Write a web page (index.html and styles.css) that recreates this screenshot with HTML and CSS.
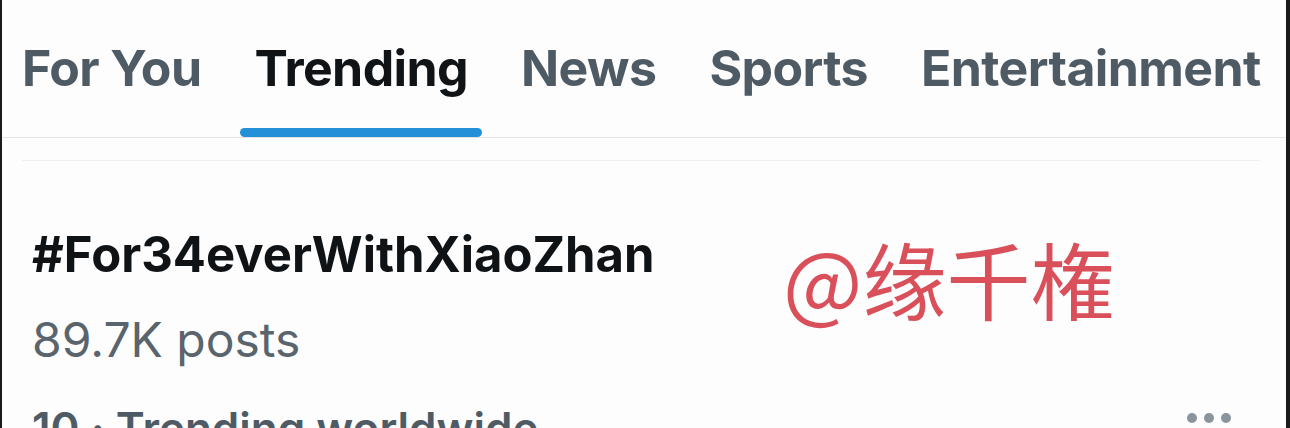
FILE: index.html
```html
<!DOCTYPE html>
<html lang="en">
<head>
  <meta charset="UTF-8">
  <meta name="viewport" content="width=device-width, initial-scale=1.0">
  <title>Explore - Trending</title>
  <link rel="stylesheet" href="styles.css">
</head>
<body>
  <div id="explore">
    <nav class="tabs">
      <a class="tab">For You</a>
      <a class="tab active">Trending</a>
      <a class="tab">News</a>
      <a class="tab">Sports</a>
      <a class="tab">Entertainment</a>
    </nav>
    <div class="separator"></div>

    <div class="trend">
      <div class="trend-name">#For34everWithXiaoZhan</div>
      <div class="trend-count">89.7K posts</div>
      <div class="trend-meta">
        <span>10 · Trending worldwide</span>
        <span class="more">
          <svg width="46" height="12" viewBox="0 0 46 12">
            <circle cx="6" cy="6" r="5" fill="#8a949c" />
            <circle cx="23" cy="6" r="5" fill="#8a949c" />
            <circle cx="40" cy="6" r="5" fill="#8a949c" />
          </svg>
        </span>
      </div>
      <div class="watermark">@缘千権</div>
    </div>
  </div>
</body>
</html>
```

FILE: styles.css
```css
body {
  font-family: Inter, 'Open Sans', sans-serif;
  margin: 0;
  padding: 0;
  background-color: #fdfdfd;
  height: 428px;
  overflow: hidden;
}

#explore {
  height: 428px;
  box-sizing: border-box;
  border-left: 2px solid #1b1b1b;
  border-right: 4px solid #1b1b1b;
  background: #fdfdfd;
  overflow: hidden;
}

.tabs {
  display: flex;
  gap: 25px;
  padding: 0 6px;
  border-bottom: 1px solid #e2e4e6;
}

.tab {
  display: flex;
  flex-direction: column;
  justify-content: space-between;
  flex-shrink: 0;
  white-space: nowrap;
  height: 137px;
  padding: 38px 14px 0;
  box-sizing: border-box;
  font-size: 50px;
  line-height: 60px;
  font-weight: 700;
  color: #4f5b64;
  letter-spacing: -0.6px;
}

.tab::after {
  content: '';
  display: block;
  height: 9px;
  border-radius: 5px;
  margin: 0 -14px;
  background: transparent;
}

.tab.active {
  color: #111417;
}

.tab.active::after {
  background: #2490d8;
}

.separator {
  margin: 22px 26px 0 20px;
  border-bottom: 1px solid #eeeff0;
}

.trend {
  position: relative;
  padding: 64px 54px 0 30px;
}

.trend-name {
  font-size: 49px;
  line-height: 60px;
  font-weight: 700;
  color: #101316;
}

.trend-count {
  margin-top: 25px;
  font-size: 48px;
  line-height: 60px;
  color: #5a646c;
}

.trend-meta {
  margin-top: 28px;
  display: flex;
  justify-content: space-between;
  align-items: flex-start;
  font-size: 44px;
  line-height: 60px;
  font-weight: 600;
  color: #4f5b64;
}

.more {
  display: flex;
  align-items: center;
  padding-top: 14px;
}

.watermark {
  position: absolute;
  left: 781px;
  top: 67px;
  font-family: 'Noto Sans CJK JP', 'Noto Sans CJK SC', sans-serif;
  font-size: 84px;
  line-height: 100px;
  color: #d9505b;
}
```
